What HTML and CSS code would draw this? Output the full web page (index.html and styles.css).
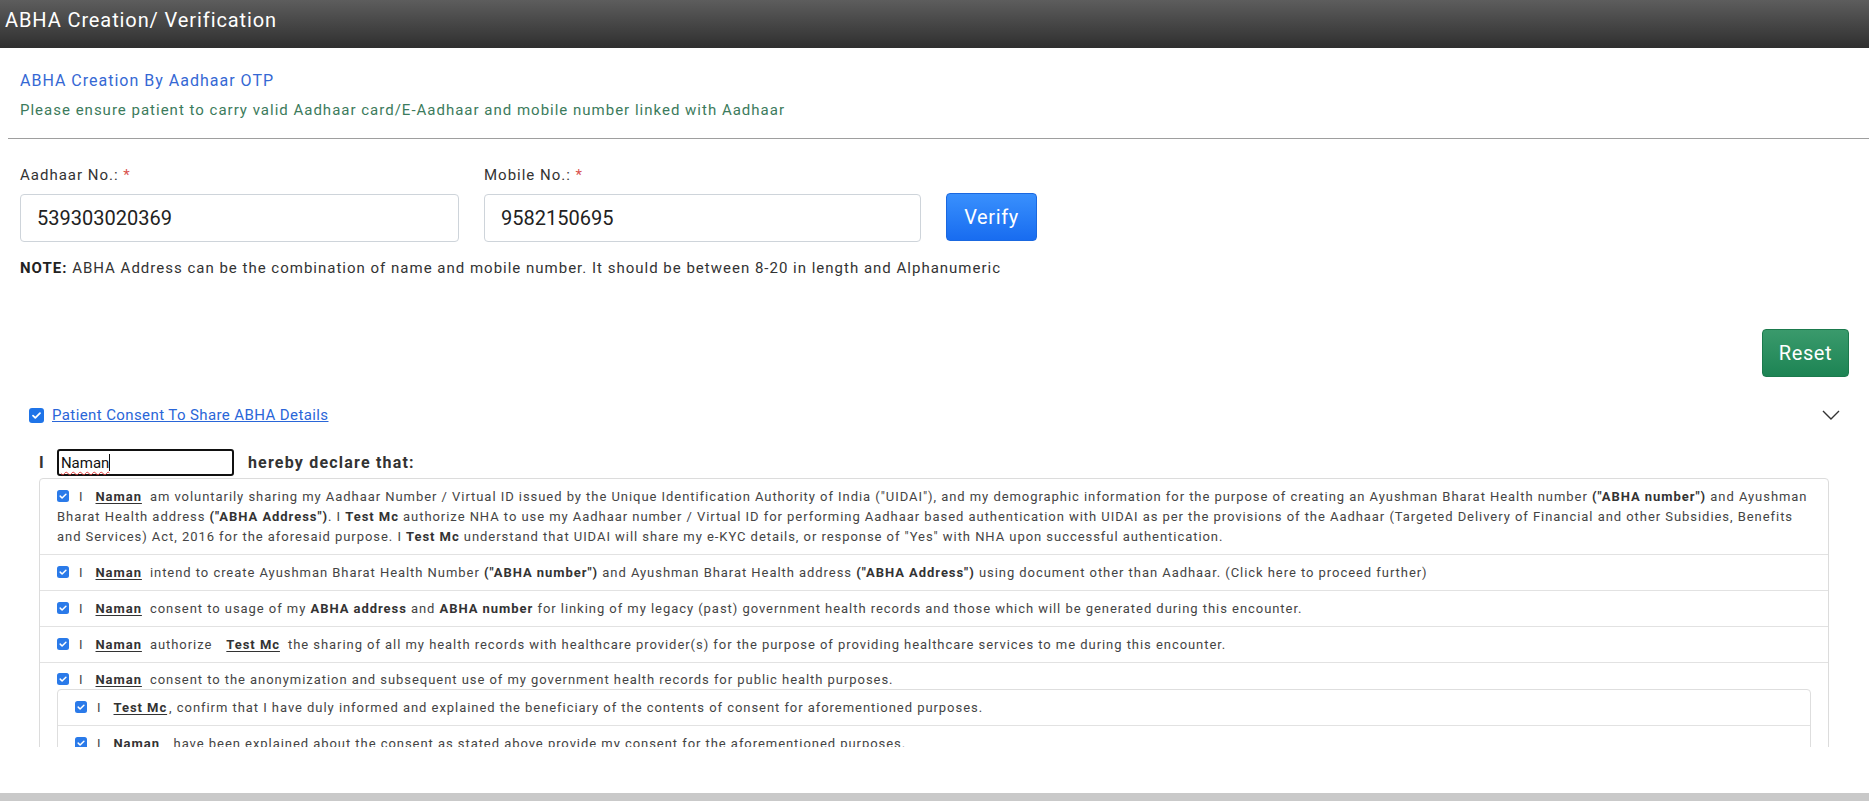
FILE: index.html
```html
<!DOCTYPE html>
<html lang="en">
<head>
<meta charset="utf-8">
<title>ABHA Creation/ Verification</title>
<link rel="stylesheet" href="styles.css">
</head>
<body>
<header class="topbar"><h1 class="topbar-title">ABHA Creation/ Verification</h1></header>
<main class="main">
  <section class="intro">
    <p class="intro-title">ABHA Creation By Aadhaar OTP</p>
    <p class="intro-note">Please ensure patient to carry valid Aadhaar card/E-Aadhaar and mobile number linked with Aadhaar</p>
  </section>
  <hr class="divider">
  <section class="form">
    <div class="form-row">
      <div class="field">
        <div class="field-label">Aadhaar No.: <span class="req">*</span></div>
        <div class="field-input">539303020369</div>
      </div>
      <div class="field field-mobile">
        <div class="field-label">Mobile No.: <span class="req">*</span></div>
        <div class="field-input">9582150695</div>
      </div>
      <button class="btn btn-verify">Verify</button>
    </div>
    <p class="note"><b>NOTE:</b> ABHA Address can be the combination of name and mobile number. It should be between 8-20 in length and Alphanumeric</p>
  </section>
  <div class="actions"><button class="btn btn-reset">Reset</button></div>
  <div class="consent-head">
    <svg class="cb-lg" width="15" height="15" viewBox="0 0 15 15"><rect x="0" y="0" width="15" height="15" rx="3" fill="#1f74e8"/><path d="M4 7.6 L6.3 9.9 L11 5.2" fill="none" stroke="#fff" stroke-width="1.8" stroke-linecap="round" stroke-linejoin="round"/></svg>
    <a class="consent-link">Patient Consent To Share ABHA Details</a>
    <svg class="chevron" width="18" height="10" viewBox="0 0 18 10"><path d="M1 1 L9 9 L17 1" fill="none" stroke="#333" stroke-width="1.4"/></svg>
  </div>
  <div class="consent-scroll">
    <div class="declare">
      <b class="declare-i">I</b>
      <div class="name-box"><span class="name-typed">Naman</span><span class="caret"></span></div>
      <b class="declare-text">hereby declare that:</b>
    </div>
    <div class="consent-box">
      <div class="c-row">
        <svg class="cb" width="12" height="12" viewBox="0 0 12 12"><rect width="12" height="12" rx="2.5" fill="#2a7ae9"/><path d="M3.2 6.1 L5.1 8 L8.9 4.2" fill="none" stroke="#fff" stroke-width="1.5" stroke-linecap="round" stroke-linejoin="round"/></svg><span class="i">I</span><b class="nm">Naman</b><span class="t">am voluntarily sharing my Aadhaar Number / Virtual ID issued by the Unique Identification Authority of India ("UIDAI"), and my demographic information for the purpose of creating an Ayushman Bharat Health number <b>("ABHA number")</b> and Ayushman<br>Bharat Health address <b>("ABHA Address")</b>. I <b>Test Mc</b> authorize NHA to use my Aadhaar number / Virtual ID for performing Aadhaar based authentication with UIDAI as per the provisions of the Aadhaar (Targeted Delivery of Financial and other Subsidies, Benefits<br>and Services) Act, 2016 for the aforesaid purpose. I <b>Test Mc</b> understand that UIDAI will share my e-KYC details, or response of "Yes" with NHA upon successful authentication.</span>
      </div>
      <div class="c-row">
        <svg class="cb" width="12" height="12" viewBox="0 0 12 12"><rect width="12" height="12" rx="2.5" fill="#2a7ae9"/><path d="M3.2 6.1 L5.1 8 L8.9 4.2" fill="none" stroke="#fff" stroke-width="1.5" stroke-linecap="round" stroke-linejoin="round"/></svg><span class="i">I</span><b class="nm">Naman</b><span class="t">intend to create Ayushman Bharat Health Number <b>("ABHA number")</b> and Ayushman Bharat Health address <b>("ABHA Address")</b> using document other than Aadhaar. (Click here to proceed further)</span>
      </div>
      <div class="c-row">
        <svg class="cb" width="12" height="12" viewBox="0 0 12 12"><rect width="12" height="12" rx="2.5" fill="#2a7ae9"/><path d="M3.2 6.1 L5.1 8 L8.9 4.2" fill="none" stroke="#fff" stroke-width="1.5" stroke-linecap="round" stroke-linejoin="round"/></svg><span class="i">I</span><b class="nm">Naman</b><span class="t">consent to usage of my <b>ABHA address</b> and <b>ABHA number</b> for linking of my legacy (past) government health records and those which will be generated during this encounter.</span>
      </div>
      <div class="c-row">
        <svg class="cb" width="12" height="12" viewBox="0 0 12 12"><rect width="12" height="12" rx="2.5" fill="#2a7ae9"/><path d="M3.2 6.1 L5.1 8 L8.9 4.2" fill="none" stroke="#fff" stroke-width="1.5" stroke-linecap="round" stroke-linejoin="round"/></svg><span class="i">I</span><b class="nm">Naman</b><span class="t">authorize</span><b class="nm nm-mid">Test Mc</b><span class="t">the sharing of all my health records with healthcare provider(s) for the purpose of providing healthcare services to me during this encounter.</span>
      </div>
      <div class="c-row c-row-last">
        <svg class="cb" width="12" height="12" viewBox="0 0 12 12"><rect width="12" height="12" rx="2.5" fill="#2a7ae9"/><path d="M3.2 6.1 L5.1 8 L8.9 4.2" fill="none" stroke="#fff" stroke-width="1.5" stroke-linecap="round" stroke-linejoin="round"/></svg><span class="i">I</span><b class="nm">Naman</b><span class="t">consent to the anonymization and subsequent use of my government health records for public health purposes.</span>
        <div class="inner-box">
          <div class="c-row">
            <svg class="cb" width="12" height="12" viewBox="0 0 12 12"><rect width="12" height="12" rx="2.5" fill="#2a7ae9"/><path d="M3.2 6.1 L5.1 8 L8.9 4.2" fill="none" stroke="#fff" stroke-width="1.5" stroke-linecap="round" stroke-linejoin="round"/></svg><span class="i">I</span><b class="nm nm-tight">Test Mc</b><span class="t">, confirm that I have duly informed and explained the beneficiary of the contents of consent for aforementioned purposes.</span>
          </div>
          <div class="c-row">
            <svg class="cb" width="12" height="12" viewBox="0 0 12 12"><rect width="12" height="12" rx="2.5" fill="#2a7ae9"/><path d="M3.2 6.1 L5.1 8 L8.9 4.2" fill="none" stroke="#fff" stroke-width="1.5" stroke-linecap="round" stroke-linejoin="round"/></svg><span class="i">I</span><b class="nm nm-plain">Naman</b><span class="t">, have been explained about the consent as stated above provide my consent for the aforementioned purposes.</span>
          </div>
        </div>
      </div>
    </div>
  </div>
</main>
<footer class="bottom-bar"></footer>
</body>
</html>
```

FILE: styles.css
```css
* { box-sizing: border-box; }
html, body { margin: 0; padding: 0; }
body {
  width: 1869px;
  height: 801px;
  display: flex;
  flex-direction: column;
  overflow: hidden;
  background: #fff;
  font-family: Roboto, "Noto Sans", "Liberation Sans", Arial, sans-serif;
  color: #333;
}

.topbar {
  flex: none;
  height: 48px;
  padding: 6px 0 0 5px;
  background: linear-gradient(#5d5d5d, #2f2f2f);
}
.topbar-title {
  margin: 0;
  font-size: 20px;
  font-weight: 400;
  line-height: 28px;
  letter-spacing: 0.9px;
  color: #fff;
}

.main {
  flex: 1;
  overflow: hidden;
  padding-left: 8px;
}

.intro { padding: 23px 12px 0; }
.intro-title {
  margin: 0;
  font-size: 16px;
  line-height: 20px;
  letter-spacing: 1px;
  color: #3568d4;
}
.intro-note {
  margin: 9px 0 0;
  font-size: 15px;
  line-height: 20px;
  letter-spacing: 1px;
  color: #3c7b5c;
}

.divider {
  margin: 18px 0 0;
  height: 0;
  border: 0;
  border-top: 1px solid #9e9e9e;
}

.form { padding: 26px 12px 0; }
.form-row {
  display: flex;
  align-items: flex-end;
  gap: 25px;
}
.field {
  width: 439px;
  display: flex;
  flex-direction: column;
  gap: 9px;
}
.field-mobile { width: 437px; }
.field-label {
  font-size: 15px;
  line-height: 20px;
  letter-spacing: 1px;
  color: #333;
}
.req { color: #d9534f; }
.field-input {
  height: 48px;
  display: flex;
  align-items: center;
  padding: 0 16px;
  border: 1px solid #ced4da;
  border-radius: 4px;
  font-size: 20px;
  letter-spacing: 0;
  color: #222;
}

.btn {
  font-family: inherit;
  border-radius: 4px;
  color: #fff;
  cursor: pointer;
  padding: 0;
}
.btn-verify {
  width: 91px;
  height: 48px;
  margin-bottom: 1px;
  border: 1px solid #1a68e0;
  background: linear-gradient(#3990fd, #186cf0);
  font-size: 20px;
  letter-spacing: 0.6px;
}
.btn-reset {
  width: 87px;
  height: 48px;
  border: 1px solid #1b7a4d;
  background: linear-gradient(#3a9a6c, #1d8454);
  font-size: 20px;
  letter-spacing: 0.6px;
}

.note {
  margin: 16px 0 0;
  font-size: 15px;
  line-height: 20px;
  letter-spacing: 1px;
  color: #333;
}
.note b { color: #222; }

.actions {
  display: flex;
  justify-content: flex-end;
  margin-top: 51px;
  padding-right: 20px;
}

.consent-head {
  display: flex;
  align-items: center;
  margin-top: 28px;
  height: 20px;
  padding: 0 29px 0 21px;
}
.cb-lg { flex: none; margin-right: 8px; }
.consent-link {
  font-size: 15px;
  line-height: 20px;
  letter-spacing: 0.4px;
  color: #2a66d8;
  text-decoration: underline;
}
.chevron { margin-left: auto; }

.consent-scroll {
  margin-top: 24px;
  height: 298px;
  overflow: hidden;
  padding: 0 40px 0 31px;
}
.declare {
  display: flex;
  align-items: center;
  height: 27px;
  font-size: 16px;
  letter-spacing: 1.2px;
  color: #333;
}
.declare-i { margin-right: 12px; }
.name-box {
  width: 177px;
  height: 27px;
  border: 2px solid #111;
  border-radius: 3px;
  padding: 0 2px;
  display: flex;
  align-items: center;
  font-size: 15px;
  letter-spacing: 0;
  color: #111;
}
.name-typed {
  text-decoration: underline wavy #e03a3a;
  text-decoration-thickness: 1px;
  text-underline-offset: 3px;
}
.caret {
  width: 1px;
  height: 17px;
  background: #111;
}
.declare-text { margin-left: 14px; }

.consent-box {
  margin-top: 2px;
  border: 1px solid #dcdcdc;
  border-radius: 4px;
}
.c-row {
  padding: 7.5px 12px 7.5px 17px;
  border-top: 1px solid #e2e2e2;
  font-size: 13px;
  line-height: 20px;
  letter-spacing: 0.95px;
  color: #444;
  white-space: nowrap;
  overflow: hidden;
}
.c-row:first-child { border-top: 0; }
.c-row-last { padding-bottom: 0; padding-top: 7px; padding-right: 17px; }
.c-row b { color: #333; }
.cb { vertical-align: -1px; margin-right: 10px; }
.i { margin-right: 12px; }
.nm {
  text-decoration: underline;
  text-underline-offset: 2px;
  margin-right: 8px;
  color: #333;
}
.nm-mid { margin-left: 14px; }
.nm-tight { margin-right: 2px; }
.nm-plain { margin-right: 6px; }

.inner-box {
  margin-top: -1px;
  border: 1px solid #dedede;
  border-radius: 4px;
}

.bottom-bar {
  flex: none;
  height: 8px;
  background: #c9c9c9;
}
```
